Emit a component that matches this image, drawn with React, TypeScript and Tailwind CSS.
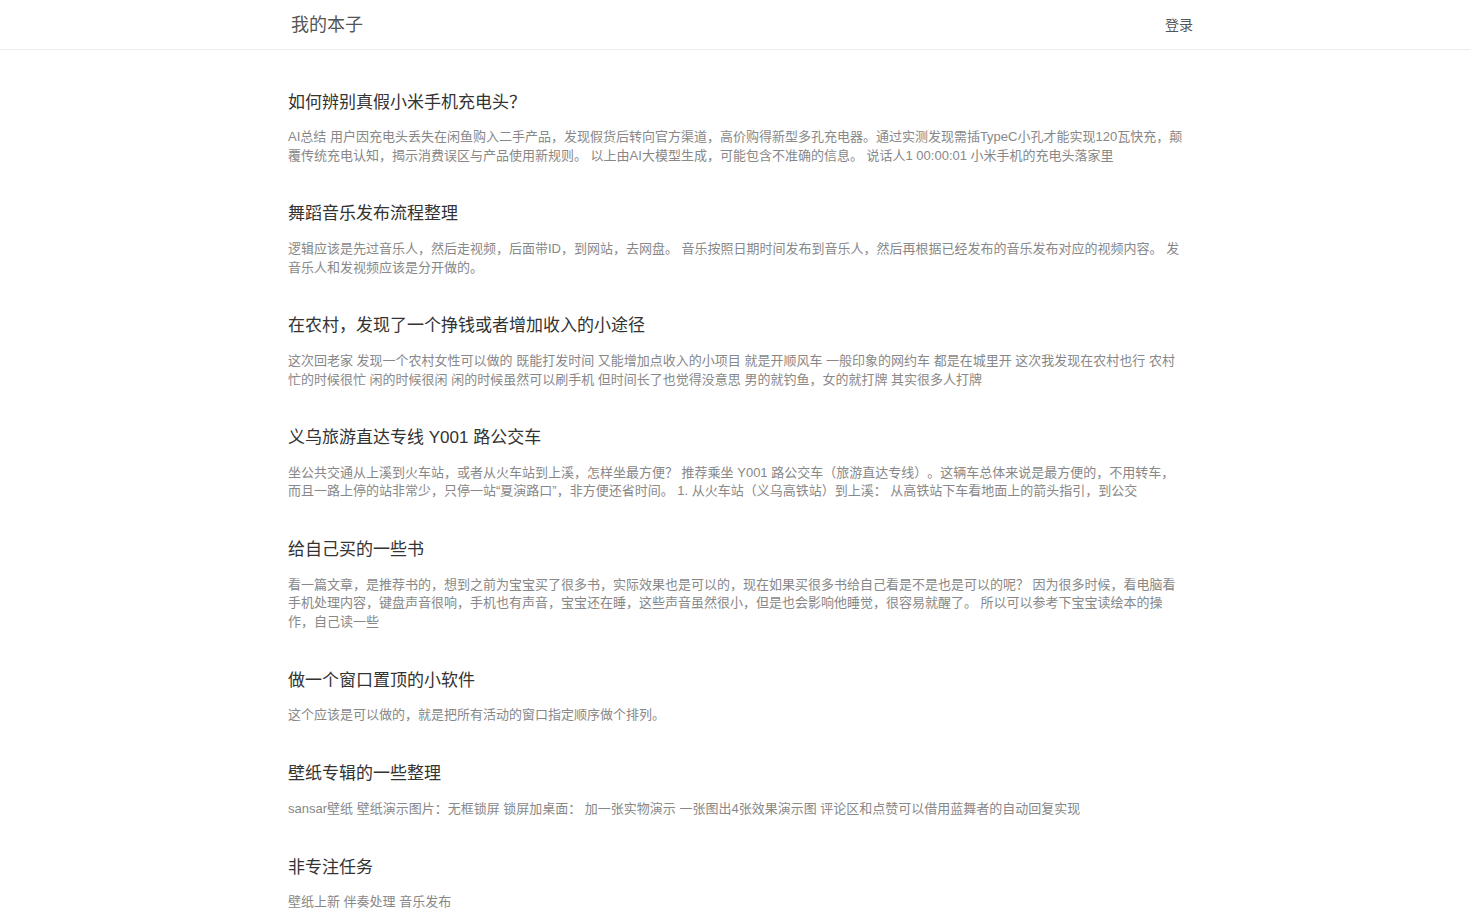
import React from "react";

const posts: { title: string; lines: string[] }[] = [
  {
    title: "如何辨别真假小米手机充电头？",
    lines: [
      "AI总结 用户因充电头丢失在闲鱼购入二手产品，发现假货后转向官方渠道，高价购得新型多孔充电器。通过实测发现需插TypeC小孔才能实现120瓦快充，颠",
      "覆传统充电认知，揭示消费误区与产品使用新规则。 以上由AI大模型生成，可能包含不准确的信息。 说话人1 00:00:01 小米手机的充电头落家里",
    ],
  },
  {
    title: "舞蹈音乐发布流程整理",
    lines: [
      "逻辑应该是先过音乐人，然后走视频，后面带ID，到网站，去网盘。 音乐按照日期时间发布到音乐人，然后再根据已经发布的音乐发布对应的视频内容。 发",
      "音乐人和发视频应该是分开做的。",
    ],
  },
  {
    title: "在农村，发现了一个挣钱或者增加收入的小途径",
    lines: [
      "这次回老家 发现一个农村女性可以做的 既能打发时间 又能增加点收入的小项目 就是开顺风车 一般印象的网约车 都是在城里开 这次我发现在农村也行 农村",
      "忙的时候很忙 闲的时候很闲 闲的时候虽然可以刷手机 但时间长了也觉得没意思 男的就钓鱼，女的就打牌 其实很多人打牌",
    ],
  },
  {
    title: "义乌旅游直达专线 Y001 路公交车",
    lines: [
      "坐公共交通从上溪到火车站，或者从火车站到上溪，怎样坐最方便？ 推荐乘坐 Y001 路公交车（旅游直达专线）。这辆车总体来说是最方便的，不用转车，",
      "而且一路上停的站非常少，只停一站“夏演路口”，非方便还省时间。 1. 从火车站（义乌高铁站）到上溪： 从高铁站下车看地面上的箭头指引，到公交",
    ],
  },
  {
    title: "给自己买的一些书",
    lines: [
      "看一篇文章，是推荐书的，想到之前为宝宝买了很多书，实际效果也是可以的，现在如果买很多书给自己看是不是也是可以的呢？ 因为很多时候，看电脑看",
      "手机处理内容，键盘声音很响，手机也有声音，宝宝还在睡，这些声音虽然很小，但是也会影响他睡觉，很容易就醒了。 所以可以参考下宝宝读绘本的操",
      "作，自己读一些",
    ],
  },
  {
    title: "做一个窗口置顶的小软件",
    lines: ["这个应该是可以做的，就是把所有活动的窗口指定顺序做个排列。"],
  },
  {
    title: "壁纸专辑的一些整理",
    lines: [
      "sansar壁纸 壁纸演示图片：无框锁屏 锁屏加桌面： 加一张实物演示 一张图出4张效果演示图 评论区和点赞可以借用蓝舞者的自动回复实现",
    ],
  },
  {
    title: "非专注任务",
    lines: ["壁纸上新 伴奏处理 音乐发布"],
  },
];

export default function App() {
  return (
    <div
      className="min-h-screen bg-white"
      style={{ fontFamily: '"Liberation Sans", "Noto Sans CJK SC", sans-serif' }}
    >
      <header className="h-[50px] border-b border-[#ececec] bg-white">
        <div className="mx-auto flex h-full w-[920px] items-center justify-between pl-[16px] pr-[2px]">
          <span className="text-[18px] leading-[24px] text-[#555]">我的本子</span>
          <span className="text-[14px] leading-[20px] text-[#555]">登录</span>
        </div>
      </header>
      <main className="mx-auto w-[894px] pt-[41px]">
        {posts.map((p, i) => (
          <article key={i} className="pb-[37.85px]">
            <h3 className="pt-[1.5px] text-[17px] leading-[20px] text-[#333] [text-spacing-trim:space-all]">
              {p.title}
            </h3>
            <p className="mt-[15.5px] text-[13px] leading-[18.57px] text-[#888] [text-spacing-trim:space-all]">
              {p.lines.map((l, j) => (
                <span key={j} className="block whitespace-nowrap">
                  {l}
                </span>
              ))}
            </p>
          </article>
        ))}
      </main>
    </div>
  );
}
